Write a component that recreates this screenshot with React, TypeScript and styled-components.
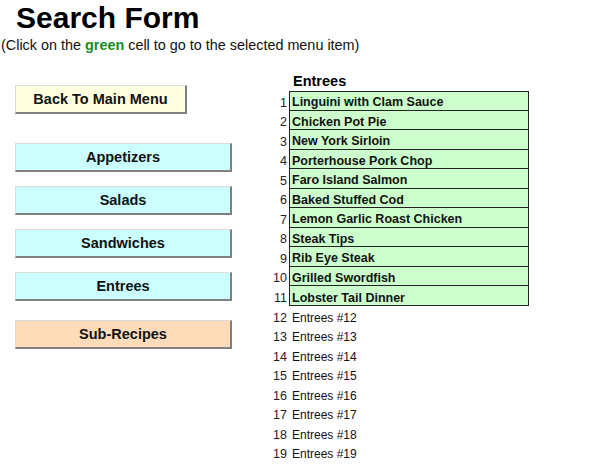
import React from "react";
import styled, { createGlobalStyle } from "styled-components";

const Global = createGlobalStyle`
  html, body { margin: 0; padding: 0; background: #ffffff; }
  body { font-family: "Liberation Sans", Arial, sans-serif; color: #111; }
`;

const Page = styled.div`
  width: 600px;
  height: 464px;
  overflow: hidden;
  background: #fff;
`;

const Title = styled.h1`
  margin: 0;
  padding: 1px 0 0 16px;
  font-size: 30px;
  line-height: 34px;
  font-weight: bold;
  color: #000;
`;

const Subtitle = styled.p`
  margin: 0;
  padding: 2px 0 0 1px;
  font-size: 14.4px;
  line-height: 17px;
  color: #111;
`;

const Green = styled.b`
  color: #1b8c1b;
`;

const Main = styled.div`
  display: flex;
  align-items: flex-start;
`;

const Sidebar = styled.div`
  width: 262px;
  padding: 31px 0 0 15px;
  box-sizing: border-box;
  display: flex;
  flex-direction: column;
  align-items: flex-start;
`;

const Button = styled.button<{ $bg: string; $w: number; $gap: number }>`
  box-sizing: border-box;
  width: ${(p) => p.$w}px;
  height: 29px;
  margin: 0 0 ${(p) => p.$gap}px 0;
  padding: 0;
  background: ${(p) => p.$bg};
  border-top: 1px solid #dcdcdc;
  border-left: 1px solid #dcdcdc;
  border-right: 2px solid #808080;
  border-bottom: 2px solid #808080;
  border-radius: 0;
  font-family: "Liberation Sans", Arial, sans-serif;
  font-size: 14.5px;
  font-weight: bold;
  color: #111;
  cursor: pointer;
`;

const ListColumn = styled.div`
  padding-top: 18px;
`;

const ListHeader = styled.div`
  margin-left: 31px;
  font-size: 14.5px;
  line-height: 18px;
  font-weight: bold;
  color: #000;
  margin-bottom: 1px;
`;

const List = styled.div`
  display: grid;
  grid-template-columns: 27px 240px;
  grid-auto-rows: 19.56px;
`;

const Num = styled.div`
  text-align: right;
  padding-right: 2px;
  font-size: 12.5px;
  display: flex;
  align-items: flex-end;
  justify-content: flex-end;
  padding-bottom: 1px;
  color: #222;
`;

const Item = styled.div<{ $filled: boolean; $first: boolean }>`
  box-sizing: border-box;
  display: flex;
  align-items: flex-end;
  padding: 0 0 ${(p) => (p.$filled ? 0.5 : 1)}px ${(p) => (p.$filled ? 2 : 3)}px;
  font-size: ${(p) => (p.$filled ? 12.5 : 12)}px;
  font-weight: ${(p) => (p.$filled ? "bold" : "normal")};
  white-space: nowrap;
  color: #111;
  background: ${(p) => (p.$filled ? "#ccffcc" : "transparent")};
  ${(p) =>
    p.$filled
      ? `border-left: 1px solid #222; border-right: 1px solid #222; border-bottom: 1px solid #222;${
          p.$first ? " border-top: 1px solid #222;" : ""
        }`
      : ""}
  cursor: ${(p) => (p.$filled ? "pointer" : "default")};
`;

const entrees = [
  "Linguini with Clam Sauce",
  "Chicken Pot Pie",
  "New York Sirloin",
  "Porterhouse Pork Chop",
  "Faro Island Salmon",
  "Baked Stuffed Cod",
  "Lemon Garlic Roast Chicken",
  "Steak Tips",
  "Rib Eye Steak",
  "Grilled Swordfish",
  "Lobster Tail Dinner",
];

const rows = Array.from({ length: 19 }, (_, i) =>
  i < entrees.length ? { name: entrees[i], filled: true } : { name: `Entrees #${i + 1}`, filled: false }
);

const buttons = [
  { label: "Back To Main Menu", bg: "#ffffe0", w: 172, gap: 29 },
  { label: "Appetizers", bg: "#ccffff", w: 217, gap: 14 },
  { label: "Salads", bg: "#ccffff", w: 217, gap: 14 },
  { label: "Sandwiches", bg: "#ccffff", w: 217, gap: 14 },
  { label: "Entrees", bg: "#ccffff", w: 217, gap: 19 },
  { label: "Sub-Recipes", bg: "#ffdcb9", w: 217, gap: 0 },
];

export default function App() {
  return (
    <Page>
      <Global />
      <Title>Search Form</Title>
      <Subtitle>
        (Click on the <Green>green</Green> cell to go to the selected menu item)
      </Subtitle>
      <Main>
        <Sidebar>
          {buttons.map((b) => (
            <Button key={b.label} $bg={b.bg} $w={b.w} $gap={b.gap}>
              {b.label}
            </Button>
          ))}
        </Sidebar>
        <ListColumn>
          <ListHeader>Entrees</ListHeader>
          <List>
            {rows.map((r, i) => (
              <React.Fragment key={i}>
                <Num>{i + 1}</Num>
                <Item $filled={r.filled} $first={i === 0}>
                  {r.name}
                </Item>
              </React.Fragment>
            ))}
          </List>
        </ListColumn>
      </Main>
    </Page>
  );
}
